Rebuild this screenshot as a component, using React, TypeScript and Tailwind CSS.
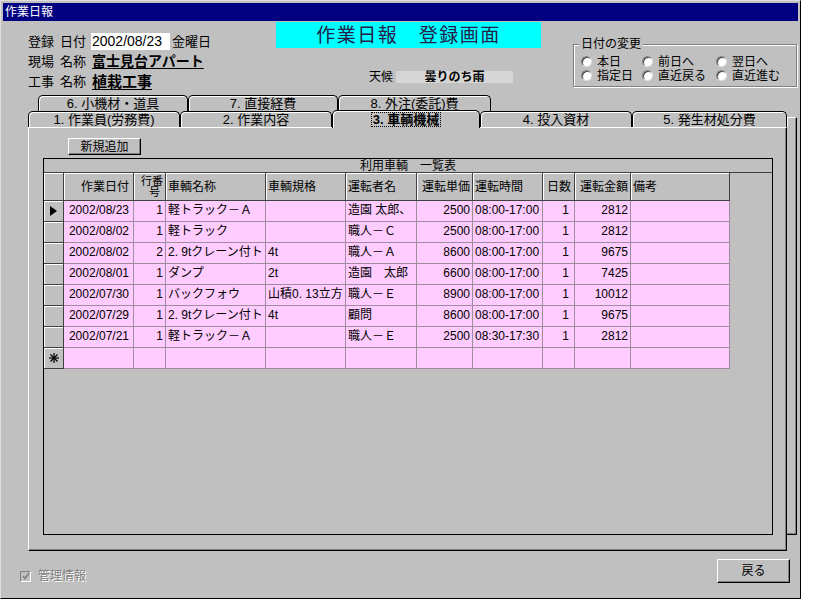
import React from "react";

const FONT = "font-['Liberation_Sans','Noto_Sans_CJK_JP',sans-serif]";

type Row = {
  date: string;
  no: string;
  name: string;
  spec: string;
  driver: string;
  price: string;
  time: string;
  days: string;
  amount: string;
  note: string;
};

const ROWS: Row[] = [
  { date: "2002/08/23", no: "1", name: "軽トラック－Ａ", spec: "", driver: "造園 太郎、", price: "2500", time: "08:00-17:00", days: "1", amount: "2812", note: "" },
  { date: "2002/08/02", no: "1", name: "軽トラック", spec: "", driver: "職人－Ｃ", price: "2500", time: "08:00-17:00", days: "1", amount: "2812", note: "" },
  { date: "2002/08/02", no: "2", name: "2. 9tクレーン付ト", spec: "4t", driver: "職人－Ａ", price: "8600", time: "08:00-17:00", days: "1", amount: "9675", note: "" },
  { date: "2002/08/01", no: "1", name: "ダンプ", spec: "2t", driver: "造園　太郎", price: "6600", time: "08:00-17:00", days: "1", amount: "7425", note: "" },
  { date: "2002/07/30", no: "1", name: "バックフォウ", spec: "山積0. 13立方", driver: "職人－Ｅ", price: "8900", time: "08:00-17:00", days: "1", amount: "10012", note: "" },
  { date: "2002/07/29", no: "1", name: "2. 9tクレーン付ト", spec: "4t", driver: "顧問", price: "8600", time: "08:00-17:00", days: "1", amount: "9675", note: "" },
  { date: "2002/07/21", no: "1", name: "軽トラック－Ａ", spec: "", driver: "職人－Ｅ", price: "2500", time: "08:30-17:30", days: "1", amount: "2812", note: "" },
];

const COLS: { key: keyof Row; w: string; head: string; h: string; d: string }[] = [
  { key: "date", w: "w-[70px]", head: "作業日付", h: "justify-end pr-[4px]", d: "text-right pr-[4px]" },
  { key: "no", w: "w-[32px]", head: "", h: "", d: "text-right pr-[2px]" },
  { key: "name", w: "w-[100px]", head: "車輌名称", h: "pl-[2px]", d: "pl-[2px]" },
  { key: "spec", w: "w-[80px]", head: "車輌規格", h: "pl-[2px]", d: "pl-[2px]" },
  { key: "driver", w: "w-[71px]", head: "運転者名", h: "pl-[2px]", d: "pl-[2px]" },
  { key: "price", w: "w-[56px]", head: "運転単価", h: "justify-end pr-[2px]", d: "text-right pr-[2px]" },
  { key: "time", w: "w-[70px]", head: "運転時間", h: "pl-[2px]", d: "pl-[2px]" },
  { key: "days", w: "w-[32px]", head: "日数", h: "justify-end pr-[3px]", d: "text-right pr-[5px]" },
  { key: "amount", w: "w-[56px]", head: "運転金額", h: "justify-end pr-[2px]", d: "text-right pr-[2px]" },
  { key: "note", w: "w-[99px]", head: "備考", h: "pl-[2px]", d: "pl-[2px]" },
];

function WinButton({ children, className }: { children: React.ReactNode; className: string }) {
  return (
    <div
      className={`flex items-center justify-center bg-[#c0c0c0] border border-t-white border-l-white border-r-black border-b-black shadow-[inset_-1px_-1px_0_#808080] ${className}`}
    >
      {children}
    </div>
  );
}

function Tab({ label, className, active }: { label: string; className: string; active?: boolean }) {
  if (active) {
    return (
      <div
        className={`relative z-10 h-[18px] mb-[-1px] bg-[#c0c0c0] border border-b-0 border-black rounded-t-[5px] shadow-[inset_1px_1px_0_#fff] flex items-start justify-center pt-[1px] text-[13px] ${className}`}
      >
        <span className="font-bold leading-[13px] border border-dotted border-black px-[1px]">{label}</span>
      </div>
    );
  }
  return (
    <div
      className={`h-[16px] bg-[#c0c0c0] border border-b-0 border-black rounded-t-[5px] shadow-[inset_1px_1px_0_#fff] flex items-center justify-center text-[13px] leading-none ${className}`}
    >
      {label}
    </div>
  );
}

function Radio({ label, className }: { label: string; className: string }) {
  return (
    <div className={`flex items-center h-[13px] ${className}`}>
      <span className="w-[11px] h-[11px] rounded-full bg-white border border-t-[#808080] border-l-[#808080] border-r-[#e0e0e0] border-b-[#e0e0e0] shadow-[inset_1px_1px_0_#404040]" />
      <span className="ml-[5px] text-[12px] leading-none">{label}</span>
    </div>
  );
}

function Selector({ kind }: { kind?: "current" | "new" }) {
  return (
    <div className="w-[20px] h-full bg-[#c0c0c0] border-r border-b border-[#404040] shadow-[inset_1px_1px_0_#fff] flex items-center justify-center">
      {kind === "current" && (
        <svg width="7" height="10" viewBox="0 0 7 10">
          <polygon points="0,0 7,5 0,10" fill="#000" />
        </svg>
      )}
      {kind === "new" && (
        <svg width="10" height="10" viewBox="0 0 10 10" stroke="#000" strokeWidth="1.2">
          <line x1="5" y1="0" x2="5" y2="10" />
          <line x1="0" y1="5" x2="10" y2="5" />
          <line x1="1.5" y1="1.5" x2="8.5" y2="8.5" />
          <line x1="8.5" y1="1.5" x2="1.5" y2="8.5" />
        </svg>
      )}
    </div>
  );
}

function VehicleTable() {
  return (
    <div className="ml-[14px] mt-[3px] w-[730px] h-[377px] border border-black bg-[#c0c0c0] flex flex-col text-[12px]">
      {/* 見出し */}
      <div className="h-[14px] border-b border-[#404040] flex items-center justify-center leading-none">
        利用車輌　一覧表
      </div>
      {/* ヘッダー */}
      <div className="flex h-[28px]">
        <Selector />
        {COLS.map((c) =>
          c.key === "no" ? (
            <div
              key={c.key}
              className={`${c.w} h-full border-r border-b border-[#404040] shadow-[inset_1px_1px_0_#fff] flex flex-col items-end justify-center pr-[2px] text-[11px] leading-[11px]`}
            >
              <span>行番</span>
              <span className="pr-[3px]">号</span>
            </div>
          ) : (
            <div
              key={c.key}
              className={`${c.w} h-full border-r border-b border-[#404040] shadow-[inset_1px_1px_0_#fff] flex items-center ${c.h}`}
            >
              {c.head}
            </div>
          )
        )}
      </div>
      {/* 明細 */}
      {ROWS.map((r, i) => (
        <div key={i} className="flex h-[21px]">
          <Selector kind={i === 0 ? "current" : undefined} />
          {COLS.map((c) => (
            <div
              key={c.key}
              className={`${c.w} h-full bg-[#ffccff] border-r border-b border-[#a08ca0] overflow-hidden whitespace-nowrap leading-[14px] pt-[2px] ${c.d}`}
            >
              {r[c.key]}
            </div>
          ))}
        </div>
      ))}
      <div className="flex h-[21px]">
        <Selector kind="new" />
        {COLS.map((c) => (
          <div key={c.key} className={`${c.w} h-full bg-[#ffccff] border-r border-b border-[#a08ca0]`} />
        ))}
      </div>
    </div>
  );
}

export default function App() {
  return (
    <div className={`w-[820px] h-[615px] bg-white text-black ${FONT}`}>
      <div className="w-[801px] h-[599px] bg-[#c0c0c0] border border-t-[#dfdfdf] border-l-[#dfdfdf] border-r-black border-b-black flex flex-col">
        {/* Title bar */}
        <div className="mt-[2px] mx-[2px] h-[18px] bg-[#000080] text-white text-[12px] leading-none flex items-center pl-[2px]">
          作業日報
        </div>

        {/* Header */}
        <div className="flex h-[74px]">
          <div className="ml-[27px] w-[248px] pt-[10px] flex flex-col text-[13px] leading-none">
            <div className="flex items-center h-[20px]">
              <span className="w-[32px]">登録</span>
              <span className="w-[31px]">日付</span>
              <span className="w-[79px] h-[17px] bg-white flex items-center pl-[1px] text-[14px] font-['Liberation_Sans',sans-serif]">
                2002/08/23
              </span>
              <span className="ml-[2px]">金曜日</span>
            </div>
            <div className="flex items-center h-[20px]">
              <span className="w-[32px]">現場</span>
              <span className="w-[32px]">名称</span>
              <span className="font-bold text-[14px] underline underline-offset-2">富士見台アパート</span>
            </div>
            <div className="flex items-center h-[20px]">
              <span className="w-[32px]">工事</span>
              <span className="w-[32px]">名称</span>
              <span className="font-bold text-[15px] underline underline-offset-2">植栽工事</span>
            </div>
          </div>

          <div className="w-[265px] flex flex-col">
            <div className="mt-[1px] h-[26px] bg-[#00ffff] flex items-center justify-center text-[19px] tracking-[1.5px] text-[#202048] leading-none">
              作業日報　登録画面
            </div>
            <div className="mt-[22px] flex items-center h-[14px] text-[12px] leading-none">
              <span className="ml-[93px] w-[27px]">天候</span>
              <span className="w-[117px] h-[12px] bg-[#d6d6d6] flex items-center justify-center font-bold">
                曇りのち雨
              </span>
            </div>
          </div>

          <div className="ml-[32px] mt-[23px] w-[224px] h-[43px] relative border border-[#808080] shadow-[inset_1px_1px_0_#fff,1px_1px_0_#fff]">
            <span className="absolute left-[5px] top-[-7px] px-[2px] bg-[#c0c0c0] text-[12px] leading-[12px]">
              日付の変更
            </span>
            <div className="pt-[10px] pl-[7px] grid grid-cols-[61px_74px_80px]">
              <Radio label="本日" className="" />
              <Radio label="前日へ" className="" />
              <Radio label="翌日へ" className="" />
              <Radio label="指定日" className="mt-[1px]" />
              <Radio label="直近戻る" className="mt-[1px]" />
              <Radio label="直近進む" className="mt-[1px]" />
            </div>
          </div>
        </div>

        {/* Tabs back row */}
        <div className="flex h-[16px] ml-[37px]">
          <Tab label="6. 小機材・道具" className="w-[150px]" />
          <Tab label="7. 直接経費" className="w-[150px]" />
          <Tab label="8. 外注(委託)費" className="w-[153px]" />
        </div>

        {/* Tabs front row */}
        <div className="flex items-end h-[16px] ml-[27px]">
          <Tab label="1. 作業員(労務費)" className="w-[152px]" />
          <Tab label="2. 作業内容" className="w-[152px]" />
          <Tab label="3. 車輌機械" className="w-[148px]" active />
          <Tab label="4. 投入資材" className="w-[152px]" />
          <Tab label="5. 発生材処分費" className="w-[155px]" />
          <div className="w-[10px] h-[10px] border-t border-l border-t-white border-l-white border-r border-r-black shadow-[inset_-1px_0_0_#808080]" />
        </div>

        {/* Tab page */}
        <div className="flex">
          <div className="ml-[27px] w-[759px] h-[424px] border border-t-white border-l-white border-r-black border-b-black shadow-[inset_-1px_-1px_0_#808080] flex flex-col">
            <WinButton className="ml-[39px] mt-[10px] w-[73px] h-[17px] text-[12px] leading-none">新規追加</WinButton>
            <VehicleTable />
          </div>
          <div className="w-[10px] h-[408px] border-r border-b border-black shadow-[inset_-1px_-1px_0_#808080]" />
        </div>

        {/* Bottom */}
        <div className="flex h-[47px]">
          <div className="ml-[19px] mt-[19px] flex items-center h-[12px]">
            <span className="w-[11px] h-[11px] border border-t-[#808080] border-l-[#808080] border-r-white border-b-white bg-[#c0c0c0] flex items-center justify-center">
              <svg width="8" height="8" viewBox="0 0 8 8" fill="none" stroke="#808080" strokeWidth="1.6">
                <polyline points="1,4 3,6.5 7,1" />
              </svg>
            </span>
            <span className="ml-[7px] text-[12px] leading-none text-[#808080] [text-shadow:1px_1px_0_#fff]">管理情報</span>
          </div>
          <WinButton className="ml-auto mr-[10px] mt-[8px] w-[73px] h-[24px] text-[12px] leading-none">戻る</WinButton>
        </div>
      </div>
    </div>
  );
}
